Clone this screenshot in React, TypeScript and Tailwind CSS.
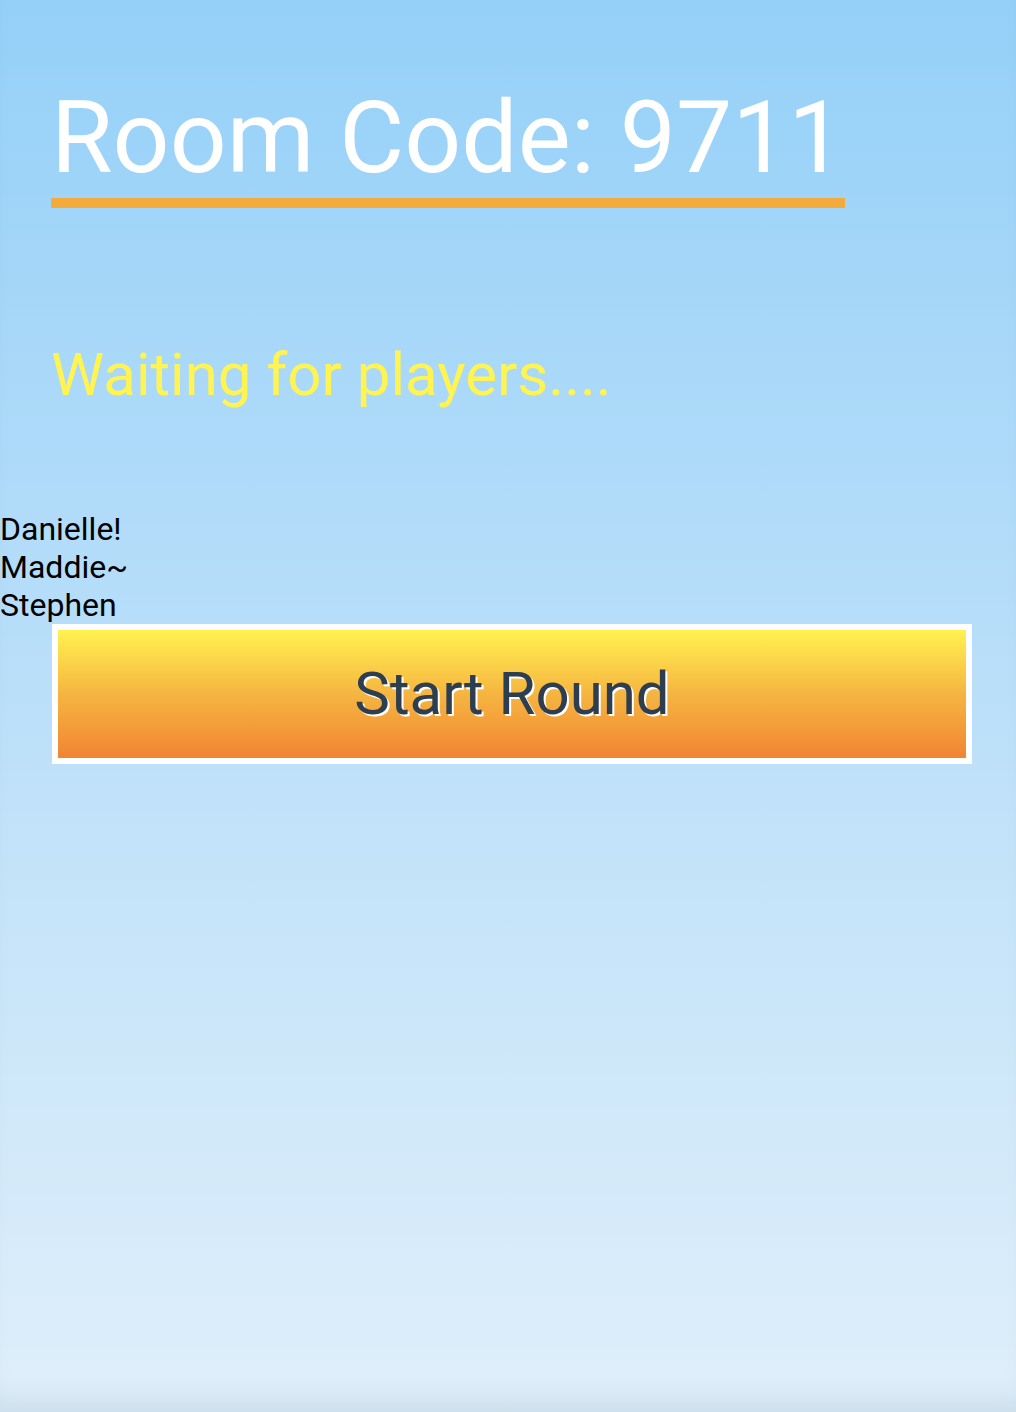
import React from "react";

export default function App() {
  const players = ["Danielle!", "Maddie~", "Stephen"];
  return (
    <div
      className="relative w-full h-[1412px] overflow-hidden bg-gradient-to-b from-[#95d0f8] to-[#e0effa] shadow-[inset_0_-28px_30px_-18px_rgba(0,50,90,0.10)]"
      style={{ fontFamily: "Roboto, 'Noto Sans', sans-serif" }}
    >
      <div className="pt-[88px] pl-[51px]">
        <h1 className="inline-block text-white text-[100px] leading-[100px] font-normal pb-[10px] border-b-[10px] border-[#f5ab3c]">
          Room Code: 9711
        </h1>
      </div>
      <div className="mt-[137px] pl-[51px] text-[#fff452] text-[60px] leading-[60px]">
        Waiting for players....
      </div>
      <div className="mt-[105px] text-black text-[32px] leading-[38px]">
        {players.map((p) => (
          <div key={p}>{p}</div>
        ))}
      </div>
      <div className="pl-[52px]">
        <button className="w-[920px] h-[140px] border-[6px] border-white bg-gradient-to-b from-[#fff250] via-[#f5b541] to-[#f08432] text-[#2c3e50] text-[60px] leading-[60px] [text-shadow:2px_2px_0_#ffffff] flex items-center justify-center">
          Start Round
        </button>
      </div>
    </div>
  );
}
